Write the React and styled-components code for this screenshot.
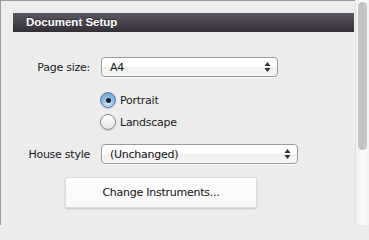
import React from 'react'
import styled, { createGlobalStyle } from 'styled-components'

const GlobalStyle = createGlobalStyle`
    html, body {
        margin: 0;
        padding: 0;
        background: #ececec;
        font-family: 'DejaVu Sans', 'Liberation Sans', sans-serif;
        letter-spacing: -0.25px;
    }
`;

const App = () => {
    return (
        <Window>
            <GlobalStyle />
            <Panel>
                <Header>Document Setup</Header>
                <Form>
                    <Row top={25}>
                        <Label>Page size:</Label>
                        <Select width={177} value="A4" />
                    </Row>
                    <Row top={15}>
                        <span />
                        <Radio checked label="Portrait" />
                    </Row>
                    <Row top={6}>
                        <span />
                        <Radio label="Landscape" />
                    </Row>
                    <Row top={14}>
                        <Label>House style</Label>
                        <Select width={197} value="(Unchanged)" />
                    </Row>
                    <ButtonRow>
                        <Button>Change Instruments...</Button>
                    </ButtonRow>
                </Form>
            </Panel>
            <ScrollTrack>
                <ScrollThumb />
            </ScrollTrack>
        </Window>
    )
}

const Select = ({ width, value }) => (
    <SelectBox style={{ width }}>
        <span>{value}</span>
        <svg width="7" height="12" viewBox="0 0 7 12">
            <path d="M3.5 1 L6.5 5 L0.5 5 Z" fill="#333" />
            <path d="M3.5 11 L6.5 7 L0.5 7 Z" fill="#333" />
        </svg>
    </SelectBox>
)

const Radio = ({ checked, label }) => (
    <RadioLabel>
        <RadioCircle checked={checked}>{checked && <RadioDot />}</RadioCircle>
        {label}
    </RadioLabel>
)

const Window = styled.div`
    width: 369px;
    height: 225px;
    display: flex;
    overflow: hidden;
`;

const Panel = styled.div`
    width: 355px;
    border-top: 1px solid #9c9c9c;
    border-left: 1px solid #9c9c9c;
    padding: 12px 1px 0 12px;
    box-sizing: border-box;
`;

const Header = styled.div`
    height: 19px;
    line-height: 19px;
    padding-left: 13px;
    background: linear-gradient(#5c5662, #332f37);
    color: #ffffff;
    font-family: 'Liberation Sans', Arial, sans-serif;
    font-size: 11.5px;
    font-weight: bold;
    letter-spacing: 0;
    text-shadow: 0 -1px 0 rgba(0, 0, 0, 0.4);
`;

const Form = styled.div`
    display: flex;
    flex-direction: column;
`;

const Row = styled.div`
    display: grid;
    grid-template-columns: 77px auto;
    column-gap: 11px;
    align-items: center;
    margin-top: ${p => p.top}px;
`;

const Label = styled.div`
    text-align: right;
    font-size: 11px;
    color: #1a1a1a;
`;

const SelectBox = styled.div`
    height: 20px;
    box-sizing: border-box;
    border: 1px solid #9a9a9a;
    border-radius: 4px;
    background: linear-gradient(#ffffff 0%, #ffffff 50%, #f0f0f0 51%, #f6f6f6 100%);
    box-shadow: 0 1px 0 rgba(255, 255, 255, 0.6);
    display: flex;
    align-items: center;
    justify-content: space-between;
    padding: 0 6px 0 8px;
    font-size: 11px;
    color: #111;
`;

const RadioLabel = styled.div`
    display: flex;
    align-items: center;
    gap: 4px;
    font-size: 11px;
    color: #1a1a1a;
    height: 16px;
    margin-left: -1px;
`;

const RadioCircle = styled.div`
    width: 16px;
    height: 16px;
    box-sizing: border-box;
    border-radius: 50%;
    border: 1px solid ${p => (p.checked ? '#5a7fa8' : '#8c8c8c')};
    background: ${p => p.checked
        ? 'radial-gradient(circle at 50% 75%, #d6ecff 0%, #8ebde9 45%, #5d95d2 100%)'
        : 'linear-gradient(#ffffff, #e4e4e4)'};
    box-shadow: 0 1px 1px rgba(0, 0, 0, 0.15);
    display: flex;
    align-items: center;
    justify-content: center;
`;

const RadioDot = styled.div`
    width: 5px;
    height: 5px;
    border-radius: 50%;
    background: #1a2030;
`;

const ButtonRow = styled.div`
    margin-top: 13px;
    padding-left: 52px;
`;

const Button = styled.div`
    width: 192px;
    height: 31px;
    box-sizing: border-box;
    border: 1px solid #dcdcdc;
    border-radius: 2px;
    background: linear-gradient(#ffffff, #f8f8f8);
    box-shadow: 0 1px 2px rgba(0, 0, 0, 0.18);
    display: flex;
    align-items: center;
    justify-content: center;
    font-size: 11px;
    color: #111;
`;

const ScrollTrack = styled.div`
    width: 14px;
    height: 225px;
    box-sizing: border-box;
    border-left: 1px solid #e0e0e0;
    background: linear-gradient(90deg, #f2f2f2, #fafafa 50%, #f2f2f2);
    padding: 2px 3px 0 2px;
`;

const ScrollThumb = styled.div`
    width: 9px;
    height: 148px;
    border-radius: 5px;
    background: #c4c4c4;
`;

export default App
